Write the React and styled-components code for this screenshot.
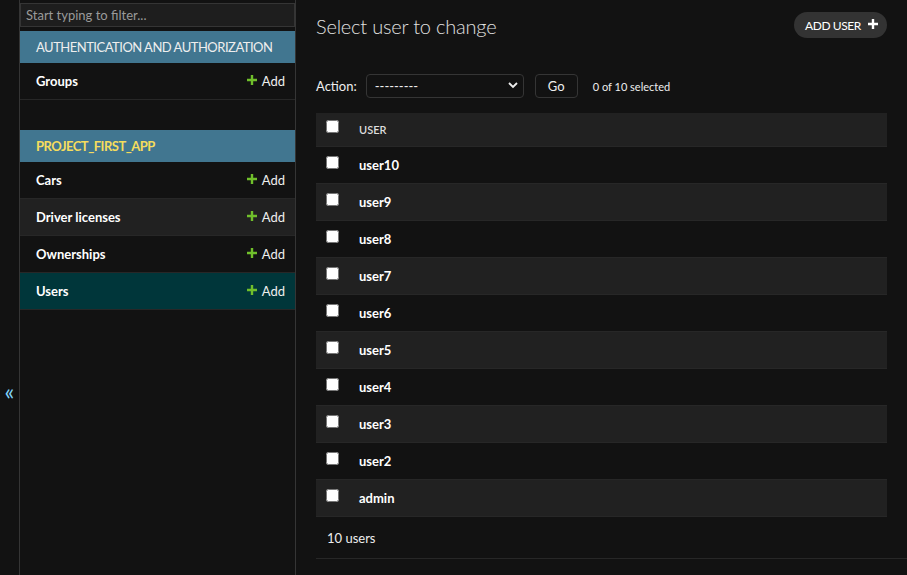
import React from 'react';
import styled, { createGlobalStyle } from 'styled-components';

const apps = [
    {
        name: 'Authentication and Authorization',
        current: false,
        models: [{ name: 'Groups' }],
    },
    {
        name: 'Project_first_app',
        current: true,
        models: [
            { name: 'Cars' },
            { name: 'Driver licenses' },
            { name: 'Ownerships' },
            { name: 'Users', selected: true },
        ],
    },
];

const users = ['user10', 'user9', 'user8', 'user7', 'user6', 'user5', 'user4', 'user3', 'user2', 'admin'];

const GlobalStyle = createGlobalStyle`
    html, body {
        margin: 0;
        padding: 0;
        background: #121212;
    }
    body {
        font-family: Lato, "Liberation Sans", sans-serif;
        color: #eeeeee;
        font-size: 13px;
    }
    * {
        box-sizing: border-box;
    }
`;

const Layout = styled.div`
    display: flex;
    min-height: 100vh;
`;

const Toggle = styled.button`
    flex: none;
    width: 20px;
    padding: 377px 0 0 0;
    display: flex;
    justify-content: center;
    align-items: flex-start;
    background: #121212;
    border: 0;
    border-right: 1px solid #353535;
    color: #81d4fa;
    font-size: 23px;
    font-family: inherit;
    cursor: pointer;
`;

const Sidebar = styled.nav`
    flex: none;
    width: 276px;
    border-right: 1px solid #353535;
`;

const Filter = styled.input`
    display: block;
    width: 100%;
    height: 24px;
    margin: 3px 0 4px;
    padding: 2px 5px;
    background: #1e1e1e;
    border: 1px solid #353535;
    color: #eee;
    font-family: inherit;
    font-size: 13px;
    outline: none;
    &::placeholder {
        color: #9a9a9a;
    }
`;

const Module = styled.div`
    margin-bottom: 30px;
`;

const Caption = styled.div`
    height: 32px;
    display: flex;
    align-items: center;
    padding-left: 16px;
    background: #417690;
    color: ${({ current }) => (current ? '#f5dd5d' : '#eeeeee')};
    font-weight: ${({ current }) => (current ? 'bold' : 'normal')};
    font-size: 13px;
    letter-spacing: -0.5px;
    text-transform: uppercase;
`;

const ModelRow = styled.div`
    height: 37px;
    display: flex;
    align-items: center;
    justify-content: space-between;
    padding: 0 10px 0 16px;
    border-bottom: 1px solid #272727;
    background: ${({ selected, striped }) => (selected ? '#00363a' : striped ? '#212121' : '#121212')};
`;

const ModelName = styled.a`
    color: #ffffff;
    font-weight: bold;
    font-size: 13px;
    text-decoration: none;
`;

const AddLink = styled.a`
    display: flex;
    align-items: center;
    gap: 5px;
    color: #eeeeee;
    font-size: 13px;
    text-decoration: none;
`;

const PlusIcon = ({ color = '#70bf2b', size = 10 }) => (
    <svg width={size} height={size} viewBox="0 0 10 10" style={{ marginTop: -3 }}>
        <path d="M3.8 0h2.4v3.8H10v2.4H6.2V10H3.8V6.2H0V3.8h3.8z" fill={color} />
    </svg>
);

const Main = styled.main`
    flex: 1;
    min-width: 0;
    padding: 12px 20px 0 20px;
`;

const Header = styled.div`
    display: flex;
    justify-content: space-between;
    align-items: center;
    height: 26px;
`;

const Title = styled.h1`
    margin: 0;
    font-size: 20px;
    font-weight: 300;
    letter-spacing: -0.2px;
    color: #e0e0e0;
    padding-top: 1px;
`;

const AddButton = styled.a`
    display: flex;
    align-items: center;
    gap: 7px;
    height: 26px;
    padding: 0 9px 0 11px;
    border-radius: 15px;
    background: #333333;
    color: #ffffff;
    font-size: 12px;
    letter-spacing: -0.4px;
    text-transform: uppercase;
    text-decoration: none;
`;

const Actions = styled.div`
    display: flex;
    align-items: center;
    margin-top: 36px;
    height: 24px;
    font-size: 13px;
`;

const ActionLabel = styled.label`
    margin-right: 9px;
`;

const SelectWrap = styled.div`
    position: relative;
    width: 158px;
    height: 24px;
`;

const Select = styled.select`
    appearance: none;
    width: 100%;
    height: 100%;
    padding: 0 24px 0 8px;
    background: #121212;
    border: 1px solid #353535;
    border-radius: 4px;
    color: #eeeeee;
    font-family: inherit;
    font-size: 13px;
`;

const Chevron = styled.svg`
    position: absolute;
    right: 6px;
    top: 8px;
    pointer-events: none;
`;

const GoButton = styled.button`
    margin-left: 11px;
    width: 43px;
    height: 24px;
    background: #121212;
    border: 1px solid #353535;
    border-radius: 4px;
    color: #eeeeee;
    font-family: inherit;
    font-size: 13px;
`;

const Counter = styled.span`
    margin-left: 15px;
    font-size: 11px;
`;

const Table = styled.table`
    width: 100%;
    margin-top: 15px;
    border-collapse: collapse;
`;

const HeadCell = styled.th`
    height: 33px;
    padding: 0 0 0 ${({ check }) => (check ? '10px' : '0')};
    width: ${({ check }) => (check ? '43px' : 'auto')};
    background: #212121;
    border-bottom: 1px solid #272727;
    text-align: left;
    font-size: 11px;
    font-weight: 600;
    color: #dddddd;
    text-transform: uppercase;
`;

const Row = styled.tr`
    background: ${({ striped }) => (striped ? '#212121' : '#121212')};
`;

const Cell = styled.td`
    height: 37px;
    padding: 0 0 0 ${({ check }) => (check ? '10px' : '0')};
    border-bottom: 1px solid #272727;
    font-size: 13px;
    font-weight: bold;
    color: #ffffff;
`;

const Check = styled.input`
    display: block;
    width: 13px;
    height: 13px;
    margin: -5px 0 0 0;
`;

const Paginator = styled.div`
    margin-right: -20px;
    padding: 13px 0 12px 11px;
    border-bottom: 1px solid #272727;
    font-size: 13px;
    color: #eeeeee;
`;

const App = () => {
    return (
        <Layout>
            <GlobalStyle />
            <Toggle>«</Toggle>
            <Sidebar>
                <Filter placeholder="Start typing to filter..." />
                {apps.map((app) => (
                    <Module key={app.name}>
                        <Caption current={app.current}>{app.name}</Caption>
                        {app.models.map((model, index) => (
                            <ModelRow key={model.name} selected={model.selected} striped={index % 2 === 1}>
                                <ModelName href="#">{model.name}</ModelName>
                                <AddLink href="#">
                                    <PlusIcon />
                                    Add
                                </AddLink>
                            </ModelRow>
                        ))}
                    </Module>
                ))}
            </Sidebar>
            <Main>
                <Header>
                    <Title>Select user to change</Title>
                    <AddButton href="#">
                        Add user
                        <PlusIcon color="#ffffff" size={10} />
                    </AddButton>
                </Header>
                <Actions>
                    <ActionLabel>Action:</ActionLabel>
                    <SelectWrap>
                        <Select defaultValue="">
                            <option value="">---------</option>
                            <option value="delete">Delete selected users</option>
                        </Select>
                        <Chevron width="10" height="7" viewBox="0 0 10 7">
                            <path d="M1 1l4 4 4-4" stroke="#eeeeee" strokeWidth="1.8" fill="none" />
                        </Chevron>
                    </SelectWrap>
                    <GoButton>Go</GoButton>
                    <Counter>0 of 10 selected</Counter>
                </Actions>
                <Table>
                    <thead>
                        <tr>
                            <HeadCell check>
                                <Check type="checkbox" />
                            </HeadCell>
                            <HeadCell>User</HeadCell>
                        </tr>
                    </thead>
                    <tbody>
                        {users.map((user, index) => (
                            <Row key={user} striped={index % 2 === 1}>
                                <Cell check>
                                    <Check type="checkbox" />
                                </Cell>
                                <Cell>{user}</Cell>
                            </Row>
                        ))}
                    </tbody>
                </Table>
                <Paginator>10 users</Paginator>
            </Main>
        </Layout>
    );
};

export default App;
